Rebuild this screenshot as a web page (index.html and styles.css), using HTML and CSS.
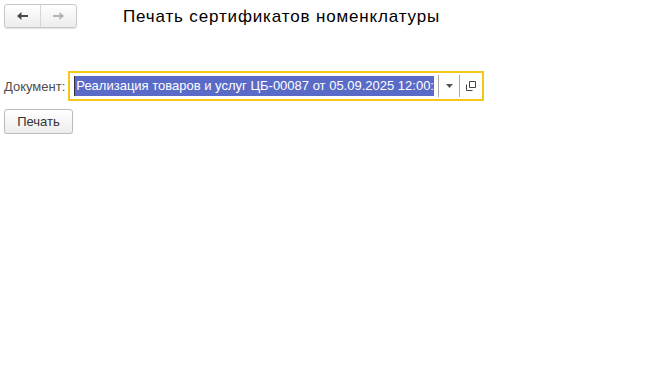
FILE: index.html
```html
<!DOCTYPE html>
<html lang="ru">
<head>
    <meta charset="UTF-8">
    <title>Печать сертификатов номенклатуры</title>
    <link rel="stylesheet" href="styles.css">
</head>
<body>
    <div class="header">
        <div class="nav">
            <button class="nav-btn">
                <svg width="11" height="8" viewBox="0 0 11 8"><path d="M0 4 L4.5 0 L4.5 3 L11 3 L11 5 L4.5 5 L4.5 8 Z" fill="#4a4a4a"/></svg>
            </button>
            <button class="nav-btn">
                <svg width="11" height="8" viewBox="0 0 11 8"><path d="M11 4 L6.5 0 L6.5 3 L0 3 L0 5 L6.5 5 L6.5 8 Z" fill="#b4b4b4"/></svg>
            </button>
        </div>
        <h1>Печать сертификатов номенклатуры</h1>
    </div>

    <div class="form">
        <div class="row">
            <label for="doc">Документ:</label>
            <div class="field">
                <div class="value"><span class="sel">Реализация товаров и услуг ЦБ-00087 от 05.09.2025 12:00:00</span></div>
                <span class="sep"></span>
                <span class="drop">
                    <svg width="7" height="4" viewBox="0 0 7 4"><path d="M0 0 L7 0 L3.5 4 Z" fill="#555"/></svg>
                </span>
                <span class="sep"></span>
                <span class="open">
                    <svg width="10" height="10" viewBox="0 0 10 10"><path d="M3.5 0.5 H9.5 V6.5 H3.5 Z M0.5 3.5 V9.5 H6.5" fill="none" stroke="#444"/></svg>
                </span>
            </div>
        </div>
        <button class="btn">Печать</button>
    </div>
</body>
</html>
```

FILE: styles.css
```css
body {
    margin: 0;
    font-family: "Liberation Sans", Arial, sans-serif;
    color: #333;
    background: #fff;
}

.header {
    display: flex;
    align-items: center;
    padding: 4px;
}

.nav {
    display: flex;
    width: 73px;
    height: 24px;
    box-sizing: border-box;
    border: 1px solid #c8c8c8;
    border-radius: 3px;
    background: linear-gradient(#ffffff, #ececec);
    box-shadow: 0 1px 1px rgba(0, 0, 0, 0.12);
}

.nav-btn {
    flex: 1;
    border: none;
    background: none;
    padding: 0;
    display: flex;
    align-items: center;
    justify-content: center;
}

.nav-btn + .nav-btn {
    border-left: 1px solid #d6d6d6;
}

h1 {
    margin: 2px 0 0 46px;
    font-size: 17px;
    letter-spacing: 0.85px;
    font-weight: normal;
    color: #000;
}

.form {
    padding: 39px 4px 0;
}

.row {
    display: flex;
    align-items: center;
}

label {
    font-size: 13px;
    color: #4d4d4d;
    margin-right: 3px;
}

.field {
    display: flex;
    align-items: center;
    width: 416px;
    height: 30px;
    box-sizing: border-box;
    border: 2px solid #f5c518;
    padding: 0 0 0 4px;
}

.value {
    flex: 1;
    overflow: hidden;
    white-space: nowrap;
    height: 20px;
    margin-right: 4px;
    border-left: 1px solid #333;
}

.sel {
    display: inline-block;
    background: #5a6bc7;
    color: #fff;
    font-size: 13px;
    line-height: 20px;
    padding-left: 1px;
}

.sep {
    width: 1px;
    height: 22px;
    background: #a8a8a8;
}

.drop, .open {
    width: 20px;
    display: flex;
    justify-content: center;
    align-items: center;
}

.open {
    width: 22px;
}

.btn {
    margin-top: 8px;
    width: 69px;
    height: 25px;
    font-family: inherit;
    font-size: 13px;
    color: #333;
    border: 1px solid #bcbcbc;
    border-radius: 3px;
    background: linear-gradient(#ffffff, #ededed);
    box-shadow: 0 1px 1px rgba(0, 0, 0, 0.15);
}
```
